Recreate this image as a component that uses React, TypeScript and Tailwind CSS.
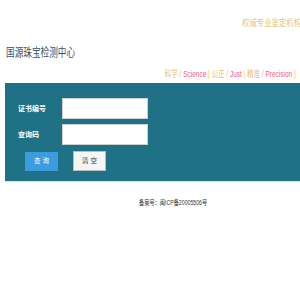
export default function App() {
  const font = "font-['Liberation_Sans','Noto_Sans_CJK_SC',sans-serif]";
  return (
    <div className={`w-[300px] h-[300px] overflow-hidden bg-white ${font}`}>
      {/* Header */}
      <div className="h-[83px] flex flex-col">
        <div className="h-[31px] pl-[242px] pt-[9px] whitespace-nowrap overflow-hidden">
          <span className="inline-block origin-left scale-x-[0.82] text-[9px] leading-[11px] text-[#e6c67c]">
            权威专业鉴定机构保证
          </span>
        </div>
        <div className="h-[32px] pl-[6px] pt-[9px] whitespace-nowrap">
          <span className="inline-block origin-left scale-x-[0.72] text-[12px] leading-[14px] text-[#3a4f6a]">
            国源珠宝检测中心
          </span>
        </div>
        <div className="h-[20px] flex justify-end pr-[4px] pt-[6px] whitespace-nowrap">
          <span className="inline-block origin-right scale-x-[0.72] text-[9px] leading-[11px]">
            <span className="text-[#e3c27a]">科学 / </span>
            <span className="text-[#ec5c86]">Science</span>
            <span className="text-[#e3c27a]"> | 公正 / </span>
            <span className="text-[#ec5c86]">Just</span>
            <span className="text-[#e3c27a]"> | 精准 / </span>
            <span className="text-[#ec5c86]">Precision</span>
            <span className="text-[#e3c27a]"> |</span>
          </span>
        </div>
      </div>

      {/* Query form */}
      <div className="ml-[5px] h-[99px] bg-[#1f7285] border-b border-[#d6e8ec] pt-[15px] pl-[13px] flex flex-col">
        <div className="flex items-center h-[21px]">
          <span className="w-[44px] text-[7px] leading-[9px] text-white font-bold">证书编号</span>
          <div className="w-[86px] h-[21px] bg-white border border-[#d0d0d0]" />
        </div>
        <div className="flex items-center h-[21px] mt-[5px]">
          <span className="w-[44px] text-[7px] leading-[9px] text-white font-bold">查询码</span>
          <div className="w-[86px] h-[21px] bg-white border border-[#d0d0d0]" />
        </div>
        <div className="flex items-center mt-[6px] pl-[7px] gap-[15px]">
          <div className="w-[33px] h-[19px] bg-[#3b9ce0] flex items-center justify-center text-[6.5px] text-white">
            查 询
          </div>
          <div className="w-[33px] h-[20px] bg-[#f5f5f5] border border-[#bcbcbc] flex items-center justify-center text-[6.5px] text-[#333]">
            清 空
          </div>
        </div>
      </div>

      {/* Footer */}
      <div className="pl-[139px] pt-[6px] whitespace-nowrap">
        <span className="inline-block origin-left scale-x-[0.8] text-[6.5px] leading-[9px] text-[#333]">
          备案号：闽ICP备20005506号
        </span>
      </div>
    </div>
  );
}
